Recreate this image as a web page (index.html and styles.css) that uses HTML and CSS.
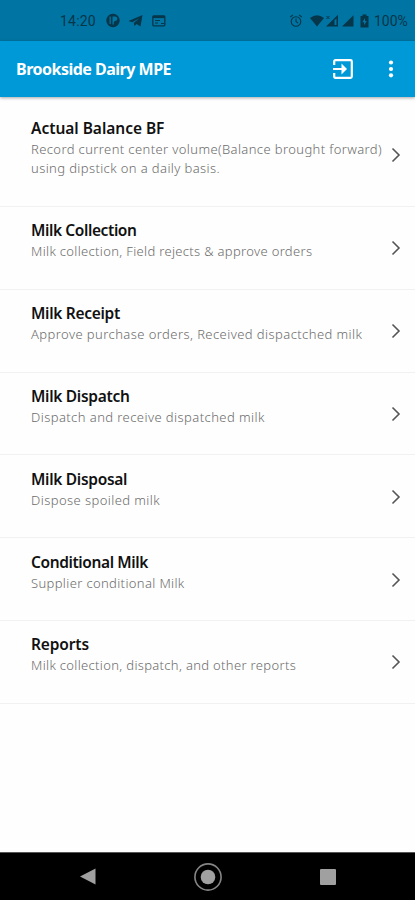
FILE: index.html
```html
<!DOCTYPE html>
<html lang="en">
<head>
<meta charset="utf-8">
<title>Brookside Dairy MPE</title>
<link rel="stylesheet" href="styles.css">
</head>
<body>
<div class="status">
  <span class="time">14:20</span>
  <svg class="notices" width="38" height="16" viewBox="0 0 38 16" fill="currentColor">
    <path fill-rule="evenodd" d="M7 .8a6.700 6.700 0 1 0 0 13.400A6.700 6.700 0 1 0 7 .8ZM3.500 3.500h1.300v7.500h-1.300ZM6.500 3.500H9a2.300 2.300 0 0 1 0 4.600L7.800 9v2.500H6.500Z"/>
    <path d="M22.500 8 36.500 2 34.500 13.500 30.500 11 28.500 13 27.700 9.900 33 5.400 26.200 9.300Z"/>
  </svg>
  <svg class="card" width="14" height="12" viewBox="0 0 14 12" fill="none" stroke="currentColor"><rect x=".8" y=".8" width="12" height="10" rx="1" stroke-width="1.300"/><path d="M1 2h12" stroke-width="2.200"/><path d="M3 5.500h5M3 8h3M9 8.500h3" stroke-width="1.200"/></svg>
  <svg class="signals" width="82" height="16" viewBox="0 0 82 16">
    <g fill="none" stroke="currentColor" stroke-width="1.100"><circle cx="7" cy="8.500" r="4.800"/><path d="M7 5.500v3l2 1.700M1.300 4 4 1.900M12.700 4 10 1.900"/></g>
    <g fill="currentColor"><path d="M21 5Q28-.5 35 5L28 13.500Z"/><path fill-rule="evenodd" d="M37 13.500 49 1.800V13.500ZM45.500 7.300V12h2V5.500Z"/><path d="m37.500 3 3 3M40.500 3l-3 3" stroke="currentColor"/><path d="M53 13.500 64.500 2.200V13.500Z"/><path fill-rule="evenodd" d="M71.500 3h2V1.500h4V3h2v11.500h-8ZM76 5 73.300 9.300h1.800v3L77.800 8H76Z"/></g>
  </svg>
  <span class="percent">100%</span>
</div>
<header>
  <h1>Brookside Dairy MPE</h1>
  <svg class="exit" width="20" height="20" viewBox="0 0 20 20" fill="none" stroke="#fff" stroke-width="2.200"><path d="M1.200 6V2.500Q1.200 1.200 2.500 1.200H17.500Q18.800 1.200 18.800 2.500V17.500Q18.800 18.800 17.500 18.800H2.500Q1.200 18.800 1.200 17.500V14M0 10H12.500"/><path d="M8.500 4.500 14 10 8.500 15.500Z" fill="#fff" stroke="none"/></svg>
  <svg class="more" width="6" height="20" viewBox="0 0 6 20" fill="#fff"><circle cx="3" cy="3.500" r="2.100"/><circle cx="3" cy="10" r="2.100"/><circle cx="3" cy="16.300" r="2.100"/></svg>
</header>
<main>
  <section class="balance"><div><h2>Actual Balance BF</h2><p>Record current center volume(Balance brought forward)<br>using dipstick on a daily basis.</p></div><svg width="10" height="16" viewBox="0 0 10 16"><path d="M1.500 1.500 8 8 1.500 14.500"/></svg></section>
  <section class="collection"><div><h2>Milk Collection</h2><p>Milk collection, Field rejects &amp; approve orders</p></div><svg width="10" height="16" viewBox="0 0 10 16"><path d="M1.500 1.500 8 8 1.500 14.500"/></svg></section>
  <section class="receipt"><div><h2>Milk Receipt</h2><p>Approve purchase orders, Received dispactched milk</p></div><svg width="10" height="16" viewBox="0 0 10 16"><path d="M1.500 1.500 8 8 1.500 14.500"/></svg></section>
  <section class="dispatch"><div><h2>Milk Dispatch</h2><p>Dispatch and receive dispatched milk</p></div><svg width="10" height="16" viewBox="0 0 10 16"><path d="M1.500 1.500 8 8 1.500 14.500"/></svg></section>
  <section class="disposal"><div><h2>Milk Disposal</h2><p>Dispose spoiled milk</p></div><svg width="10" height="16" viewBox="0 0 10 16"><path d="M1.500 1.500 8 8 1.500 14.500"/></svg></section>
  <section class="conditional"><div><h2>Conditional Milk</h2><p>Supplier conditional Milk</p></div><svg width="10" height="16" viewBox="0 0 10 16"><path d="M1.500 1.500 8 8 1.500 14.500"/></svg></section>
  <section class="reports"><div><h2>Reports</h2><p>Milk collection, dispatch, and other reports</p></div><svg width="10" height="16" viewBox="0 0 10 16"><path d="M1.500 1.500 8 8 1.500 14.500"/></svg></section>
</main>
<nav>
  <svg width="16" height="17" viewBox="0 0 16 17"><path d="M0 8.500 15.500.5V16.500Z"/></svg>
  <svg width="28" height="28" viewBox="0 0 28 28"><circle cx="14" cy="14" r="13.100" fill="none" stroke="#858585" stroke-width="1.600"/><circle cx="14" cy="14" r="7.300"/></svg>
  <svg width="16" height="16" viewBox="0 0 16 16"><rect width="16" height="16" rx="1"/></svg>
</nav>
</body>
</html>
```
FILE: styles.css
```css
* { box-sizing: border-box; }
body { margin: 0; height: 900px; display: flex; flex-direction: column; background: #fefefe; font-family: "Noto Sans", sans-serif; overflow: hidden; }
svg { display: block; flex: none; }
.status { height: 41px; flex: none; display: flex; align-items: center; background: #0074a2; color: #06364a; padding: 0 7px 0 60px; font: 14px/16px Roboto, sans-serif; }
.time { width: 46px; letter-spacing: .2px; }
.card { margin-left: 8px; }
.signals { margin-left: auto; margin-right: 3px; }
.percent { width: 34px; font-size: 14px; white-space: nowrap; }
header { height: 56px; flex: none; display: flex; align-items: center; padding: 0 21px 0 16px; background: #0099d8; box-shadow: 0 1px 3px rgba(0,0,0,.35); color: #fff; }
h1 { margin: 0; flex: 1; font-size: 16px; line-height: 24px; font-weight: 700; letter-spacing: -.5px; }
.more { margin-left: 35px; }
main { flex: 1; }
section { height: 82.800px; display: flex; justify-content: space-between; padding: 13.400px 14px 0 31px; border-bottom: 1px solid #f1f1f1; }
h2 { margin: 0; font-size: 15.500px; line-height: 21px; font-weight: 600; color: #111; letter-spacing: -.3px; white-space: nowrap; }
p { margin: 0; padding-top: 1px; font-size: 13px; line-height: 19px; color: #6c6c6c; font-weight: 300; letter-spacing: .43px; white-space: nowrap; }
section svg { margin-top: 20px; fill: none; stroke: #555; stroke-width: 1.600; }
.balance { height: 110px; padding-top: 21px; }
.balance svg { margin-top: 29px; }
.balance h2 { letter-spacing: -.03px; }
.balance p { letter-spacing: .39px; }
.collection h2, .conditional h2 { letter-spacing: -.4px; }
.collection p, .reports p { letter-spacing: .33px; }
.conditional p { letter-spacing: .36px; }
.reports h2 { letter-spacing: -.15px; }
nav { height: 48px; flex: none; display: flex; align-items: center; justify-content: space-between; background: #000; border-top: 1px solid #555; padding: 0 79px 0 80px; fill: #a0a0a0; }
```
